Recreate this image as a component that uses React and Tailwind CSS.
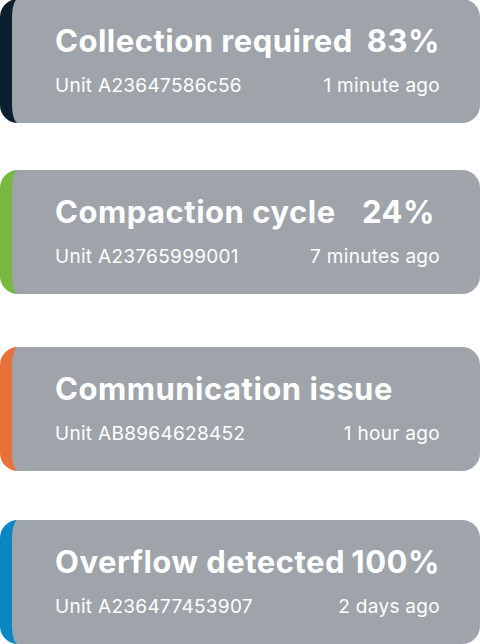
export default function App() {
  const items = [
    { title: "Collection required", pct: "83%", unit: "Unit A23647586c56", time: "1 minute ago", border: "border-[#0c1f2e]", mt: "mt-[-1px]", pr: "" },
    { title: "Compaction cycle", pct: "24%", unit: "Unit A23765999001", time: "7 minutes ago", border: "border-[#77b843]", mt: "mt-[47px]", pr: "pr-[5px]" },
    { title: "Communication issue", pct: "", unit: "Unit AB8964628452", time: "1 hour ago", border: "border-[#e8713a]", mt: "mt-[53px]", pr: "" },
    { title: "Overflow detected", pct: "100%", unit: "Unit A236477453907", time: "2 days ago", border: "border-[#0a86c3]", mt: "mt-[49px]", pr: "" },
  ];
  return (
    <div className="w-[480px] h-[644px] bg-white overflow-hidden flex flex-col" style={{ fontFamily: "Inter, 'Noto Sans', sans-serif" }}>
      {items.map((it, i) => (
        <div
          key={i}
          className={`${it.mt} h-[124px] shrink-0 rounded-[18px] border-l-[12px] ${it.border} bg-[#9ea4aa] pl-[43px] pr-[40px] pt-[24px] text-white`}
        >
          <div className="flex items-baseline justify-between text-[31px] font-bold leading-[36px] tracking-[0.5px]">
            <span>{it.title}</span>
            <span className={it.pr}>{it.pct}</span>
          </div>
          <div className="mt-[16px] flex items-baseline justify-between text-[19px] leading-[22px] tracking-[0.3px]">
            <span>{it.unit}</span>
            <span>{it.time}</span>
          </div>
        </div>
      ))}
    </div>
  );
}
